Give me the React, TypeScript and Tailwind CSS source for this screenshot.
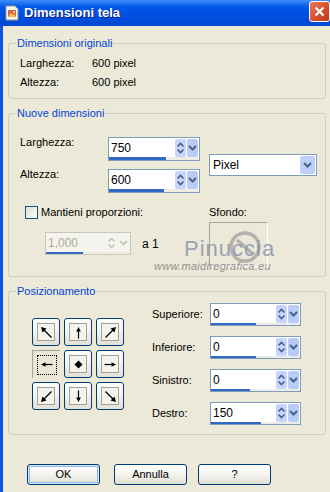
import React from "react";

const font = { fontFamily: '"Liberation Sans", Arial, sans-serif' };

const UpDown = ({ disabled }: { disabled?: boolean }) => {
  const c = disabled ? "#C9C7BA" : "#4D6185";
  return (
    <svg width="11" height="18" viewBox="0 0 11 18">
      <polyline points="2.5,7.5 5.5,4.5 8.5,7.5" fill="none" stroke={c} strokeWidth="1.7" />
      <polyline points="2.5,10.5 5.5,13.5 8.5,10.5" fill="none" stroke={c} strokeWidth="1.7" />
    </svg>
  );
};

const Chevron = ({ disabled }: { disabled?: boolean }) => (
  <svg width="11" height="10" viewBox="0 0 11 10">
    <polyline
      points="2,3 5.5,6.5 9,3"
      fill="none"
      stroke={disabled ? "#C9C7BA" : "#4D6185"}
      strokeWidth="2"
    />
  </svg>
);

const SpinBox = ({
  value,
  fill,
  className,
  disabled,
}: {
  value: string;
  fill: number;
  className: string;
  disabled?: boolean;
}) => (
  <div
    className={`flex flex-col border ${
      disabled ? "border-[#C9C7BA] bg-[#F5F4EE]" : "border-[#7F9DB9] bg-white"
    } ${className}`}
  >
    <div className="flex flex-1 items-stretch">
      <span
        className={`flex flex-1 items-center pl-[2px] text-[12px] leading-none ${
          disabled ? "text-[#ACA899]" : "text-black"
        }`}
      >
        {value}
      </span>
      <div className="flex gap-[1px] pt-[1px] pr-[1px]">
        <div
          className={`flex w-[11px] items-center justify-center rounded-[2px] ${
            disabled ? "bg-[#F5F4EE]" : "bg-[#C6D6FA]"
          }`}
        >
          <UpDown disabled={disabled} />
        </div>
        <div
          className={`flex w-[11px] items-center justify-center rounded-[2px] ${
            disabled ? "bg-[#F5F4EE]" : "bg-[#B8CCF7]"
          }`}
        >
          <Chevron disabled={disabled} />
        </div>
      </div>
    </div>
    <div className="h-[3px] bg-[#ECEBE4]">
      <div className="h-full bg-[#316AC5]" style={{ width: `${fill}px` }} />
    </div>
  </div>
);

const Group = ({
  title,
  className,
  children,
}: {
  title: string;
  className: string;
  children: React.ReactNode;
}) => (
  <fieldset className={`ml-[5px] w-[318px] rounded-[3px] border border-[#D0D0BF] ${className}`}>
    <legend className="ml-[7px] px-[1px] text-[11px] leading-[13px] text-[#0046D5]">{title}</legend>
    {children}
  </fieldset>
);

const Arrow = ({ rot, diag }: { rot: number; diag?: boolean }) => (
  <svg width="13" height="13" viewBox="0 0 13 13">
    <g transform={`rotate(${rot} 6.5 6.5)`}>
      {diag ? (
        <>
          <line x1="11.5" y1="11.5" x2="3" y2="3" stroke="#000" strokeWidth="1.2" />
          <polygon points="1,1 6.5,2.5 2.5,6.5" fill="#000" />
        </>
      ) : (
        <>
          <line x1="6.5" y1="12.5" x2="6.5" y2="3" stroke="#000" strokeWidth="1.2" />
          <polygon points="6.5,1 4.2,5.5 8.8,5.5" fill="#000" />
        </>
      )}
    </g>
  </svg>
);

const Dot = () => (
  <svg width="9" height="9" viewBox="0 0 9 9">
    <polygon points="4.5,0.5 8.5,4.5 4.5,8.5 0.5,4.5" fill="#000" />
  </svg>
);

const PosBtn = ({ children, selected }: { children: React.ReactNode; selected?: boolean }) =>
  selected ? (
    <div className="flex h-[28px] w-[28px] items-center justify-center border-t border-l border-[#A5A293] bg-[#EAE7D8]">
      <div className="flex h-[20px] w-[20px] items-center justify-center border border-dotted border-black">
        {children}
      </div>
    </div>
  ) : (
    <div className="flex h-[28px] w-[28px] items-center justify-center rounded-[3px] border border-[#003C74] bg-linear-to-b from-white to-[#E4E1D4]">
      <div className="flex h-[18px] w-[18px] items-center justify-center border border-[#A0A0A0] bg-[#F4F3EE]">
        {children}
      </div>
    </div>
  );

const XpButton = ({ label, def, className }: { label: string; def?: boolean; className: string }) => (
  <div
    className={`flex h-[21px] w-[73px] items-center justify-center rounded-[3px] border border-[#003C74] bg-linear-to-b from-white via-[#F4F3EE] to-[#E2DFD2] text-[11px] text-black ${
      def ? "shadow-[inset_0_0_0_1px_#CEE7FF,inset_0_0_0_2px_#98B8F0]" : ""
    } ${className}`}
  >
    {label}
  </div>
);

const TitleIcon = () => (
  <svg width="16" height="16" viewBox="0 0 16 16">
    <path d="M2 1h9l3 3v11H2z" fill="#F4F4F0" stroke="#9A9A9A" />
    <rect x="4" y="5" width="8" height="7" fill="#D9664A" />
    <path d="M4 12l3-4 2 2 1-1 2 3z" fill="#F2C14E" />
    <circle cx="10" cy="7" r="1" fill="#FFE8A0" />
  </svg>
);

const Row = ({ label, value }: { label: string; value: string }) => (
  <div className="flex h-[19px] items-center pl-[11px] text-[11px]">
    <span className="w-[72px]">{label}</span>
    <span>{value}</span>
  </div>
);

export default function App() {
  return (
    <div className="flex h-[492px] w-[330px] flex-col overflow-hidden bg-[#0B55E4] text-black" style={font}>
      <div className="flex h-[26px] shrink-0 items-center bg-linear-to-b from-[#3D8EF8] via-[#0057EA] via-25% to-[#0047D2] pl-[4px]">
        <TitleIcon />
        <span className="ml-[4px] text-[13px] font-bold text-white [text-shadow:1px_1px_0_#0A1E80]">
          Dimensioni tela
        </span>
        <div className="mt-[-3px] ml-auto flex h-[21px] w-[21px] items-center justify-center rounded-[3px] border border-white bg-linear-to-br from-[#E8795A] via-[#D9512F] to-[#B8391B]">
          <svg width="13" height="13" viewBox="0 0 13 13">
            <path d="M2.5 2.5l8 8M10.5 2.5l-8 8" stroke="#fff" strokeWidth="2.2" />
          </svg>
        </div>
      </div>

      <div className="ml-[3px] flex flex-1 flex-col bg-[#ECE9D8] pt-[11px]">
        <Group title="Dimensioni originali" className="h-[62px]">
          <div className="pt-[4px]">
            <Row label="Larghezza:" value="600 pixel" />
            <Row label="Altezza:" value="600 pixel" />
          </div>
        </Group>

        <Group title="Nuove dimensioni" className="mt-[8px] h-[170px]">
          <div className="relative">
            <div className="mt-[17px] flex">
              <div className="flex flex-col pl-[11px] text-[11px]">
                <div className="flex items-start">
                  <span className="mt-[-1px] w-[88px] leading-[13px]">Larghezza:</span>
                  <SpinBox value="750" fill={57} className="h-[24px] w-[92px]" />
                </div>
                <div className="mt-[8px] flex items-start">
                  <span className="mt-[-1px] w-[88px] leading-[13px]">Altezza:</span>
                  <SpinBox value="600" fill={55} className="h-[24px] w-[92px]" />
                </div>
              </div>
              <div className="ml-[9px] flex h-[22px] w-[108px] items-center self-center border border-[#7F9DB9] bg-white">
                <span className="flex-1 pl-[3px] text-[12px]">Pixel</span>
                <div className="mr-[1px] flex h-[18px] w-[15px] items-center justify-center rounded-[2px] bg-[#BCCFF8]">
                  <Chevron />
                </div>
              </div>
            </div>

            <div className="mt-[13px] flex text-[11px]">
              <div className="flex w-[200px] flex-col">
                <div className="flex h-[13px] items-center pl-[16px]">
                  <div className="h-[13px] w-[13px] border border-[#1C5180] bg-linear-to-br from-[#DCDBD4] to-white" />
                  <span className="ml-[3px] leading-[13px]">Mantieni proporzioni:</span>
                </div>
                <div className="mt-[13px] flex items-center pl-[36px]">
                  <SpinBox value="1,000" fill={37} disabled className="h-[23px] w-[86px]" />
                  <span className="ml-[11px] text-[12px]">a 1</span>
                </div>
              </div>
              <div className="flex flex-col">
                <span className="leading-[13px]">Sfondo:</span>
                <div className="mt-[3px] h-[45px] w-[59px] overflow-hidden border border-t-[#A6A59B] border-r-white border-b-white border-l-[#A6A59B]">
                  <svg width="36" height="36" viewBox="0 0 36 36" className="mt-[6px] ml-[17px] opacity-70">
                    <circle cx="18" cy="18" r="14" fill="none" stroke="#9C9C9C" strokeWidth="3.5" />
                    <path d="M10 11l16 14" stroke="#9C9C9C" strokeWidth="3.5" />
                  </svg>
                </div>
              </div>
            </div>

            <span className="absolute top-[101px] left-[175px] text-[22px] leading-[22px] tracking-[1px] text-[#8990AE] opacity-80">
              Pinuccia
            </span>
            <span className="absolute top-[123px] left-[145px] text-[11px] leading-[13px] tracking-[0.3px] text-[#8A8A8A] italic opacity-90">
              www.maidiregrafica.eu
            </span>
          </div>
        </Group>

        <Group title="Posizionamento" className="mt-[8px] h-[150px]">
          <div className="flex text-[11px]">
            <div className="mt-[20px] ml-[23px] grid grid-cols-3 gap-[4px] self-start">
              <PosBtn><Arrow rot={0} diag /></PosBtn>
              <PosBtn><Arrow rot={0} /></PosBtn>
              <PosBtn><Arrow rot={90} diag /></PosBtn>
              <PosBtn selected><Arrow rot={270} /></PosBtn>
              <PosBtn><Dot /></PosBtn>
              <PosBtn><Arrow rot={90} /></PosBtn>
              <PosBtn><Arrow rot={270} diag /></PosBtn>
              <PosBtn><Arrow rot={180} /></PosBtn>
              <PosBtn><Arrow rot={180} diag /></PosBtn>
            </div>
            <div className="mt-[5px] ml-[28px] flex flex-col gap-[10px]">
              {[
                ["Superiore:", "0", 45],
                ["Inferiore:", "0", 45],
                ["Sinistro:", "0", 39],
                ["Destro:", "150", 50],
              ].map(([label, value, fill]) => (
                <div key={label as string} className="flex items-center">
                  <span className="w-[58px]">{label}</span>
                  <SpinBox value={value as string} fill={fill as number} className="h-[23px] w-[91px]" />
                </div>
              ))}
            </div>
          </div>
        </Group>

        <div className="mt-[29px] flex">
          <XpButton label="OK" def className="ml-[24px]" />
          <XpButton label="Annulla" className="ml-[14px]" />
          <XpButton label="?" className="ml-[11px]" />
        </div>
      </div>
    </div>
  );
}
